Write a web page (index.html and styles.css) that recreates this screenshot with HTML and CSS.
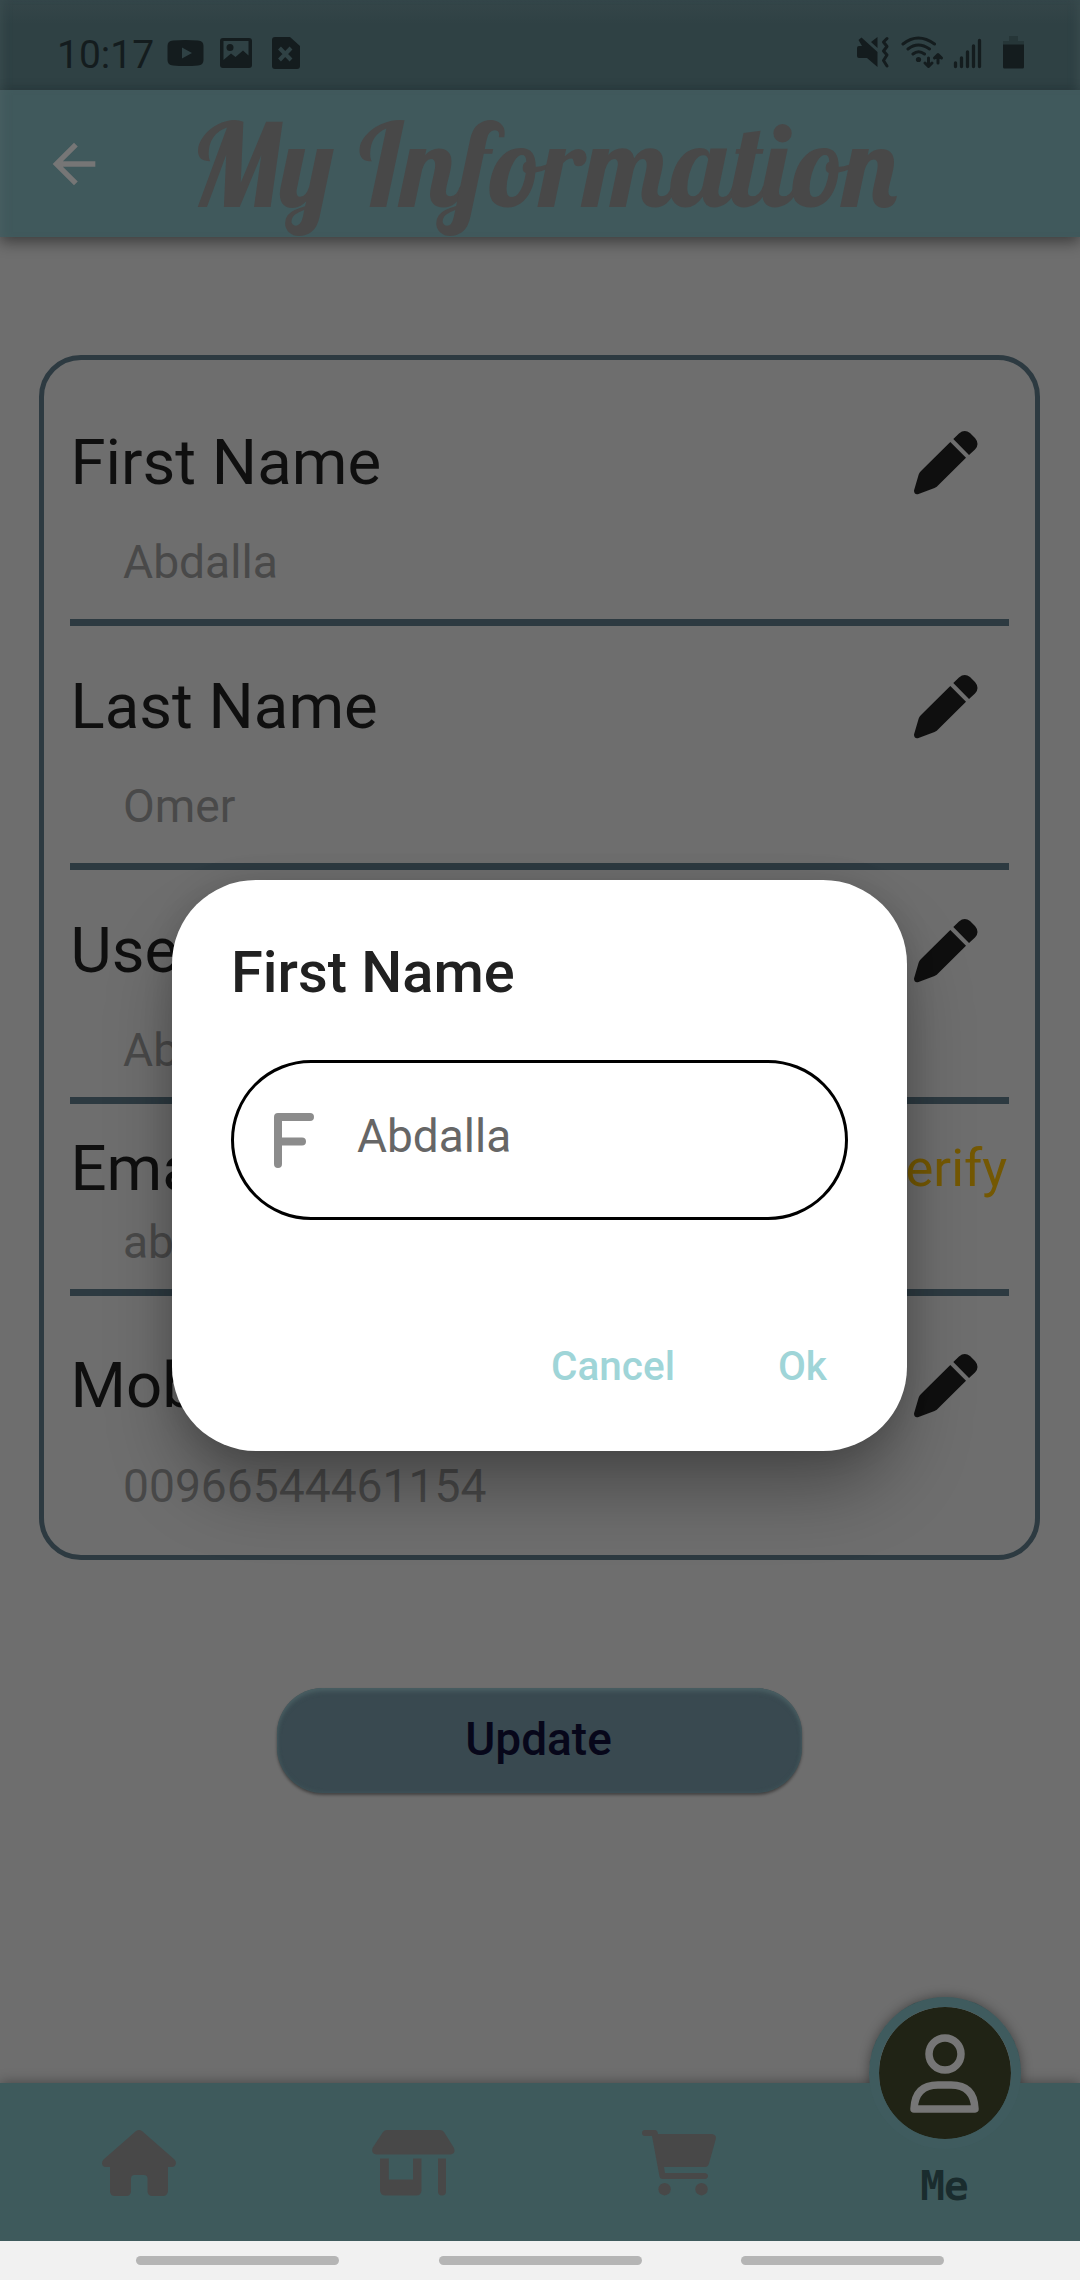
FILE: index.html
```html
<!DOCTYPE html>
<html lang="en">
<head>
<meta charset="utf-8">
<title>My Information</title>
<link rel="stylesheet" href="styles.css">
</head>
<body>
<svg class="defs" aria-hidden="true">
  <symbol id="pencil" viewBox="0 0 64 64">
    <path d="M39.3 8 45 2.5Q50.5-2 56 2l5 5q5 6 0 11.500L55 24ZM36.300 11 52 26.700 24.500 54Q23 56 20.500 57L4.500 63Q0 64 0 59.500L4.700 43.500Q5.300 41.500 7 40Z"/>
  </symbol>
</svg>
<div class="screen">
  <div class="status">
    <span class="clock">10:17</span>
    <svg class="st-youtube" width="37" height="26" viewBox="0 0 37 26"><path fill-rule="evenodd" d="M6 .6Q18.500-.6 31 .6 36.500 1 36.500 6V20Q36.500 25 31 25.500 18.500 26.500 6 25.500.500 25 .5 20V6Q.5 1 6 .6ZM15 7.500V18.500L25 13Z"/></svg>
    <svg class="st-image" width="32" height="30" viewBox="0 0 32 30"><path fill-rule="evenodd" d="M3 0H29Q32 0 32 3V27Q32 30 29 30H3Q0 30 0 27V3Q0 0 3 0ZM3.500 3V22L11 15.500 15.500 19 23 12.500 28.500 17.500V3Z"/><circle cx="10" cy="9.500" r="3.500"/></svg>
    <svg class="st-file" width="28" height="32" viewBox="0 0 28 32"><path d="M3 0H18L28 9V29Q28 32 25 32H3Q0 32 0 29V3Q0 0 3 0Z"/><path class="cross" d="M7.500 11 19 23M19 11 7.500 23"/></svg>
    <svg class="st-right" width="170" height="34" viewBox="0 0 170 34">
      <path d="M0 12Q0 10 2 10H5L1.500 4 4.500 1.500 20.500 16V31L10 22H2Q0 22 0 20ZM14 6 20.500 1V12Z"/>
      <path class="line" d="M30 2.500 26.500 6 30 10.500 26.500 15 30 19 26.500 24.500 30 30"/>
      <path class="line" d="M46 8Q61-4 77.500 8M51 13Q61 5 72.500 13M56 18Q61.500 13.500 67.500 18"/>
      <circle cx="61.500" cy="23.500" r="2.600"/>
      <path class="line" d="M71.500 22V30M68 27 71.500 30.500 75 27M81 27V19.500M77.500 22 81 18.500 84.500 22"/>
      <path class="bars" d="M98.500 27V30.500M104.500 22V30.500M110.500 16V30.500M116.500 10V30.500M122.500 4.500V30.500"/>
      <path class="faint" d="M152 0H161V5H167V9H146V5H152Z"/>
      <path d="M146 8.500H167V31Q167 32.500 165.500 32.500H147.500Q146 32.500 146 31Z"/>
    </svg>
  </div>
  <header class="appbar">
    <svg class="back" width="64" height="64" viewBox="0 0 24 24"><path d="M20 11H7.830l5.590-5.590L12 4l-8 8 8 8 1.410-1.410L7.830 13H20v-2z"/></svg>
    <h1>My Information</h1>
  </header>
  <main>
    <section class="card">
      <div class="row">
        <div class="head"><span>First Name</span><svg class="edit"><use href="#pencil"/></svg></div>
        <div class="value">Abdalla</div>
      </div>
      <div class="row">
        <div class="head"><span>Last Name</span><svg class="edit"><use href="#pencil"/></svg></div>
        <div class="value">Omer</div>
      </div>
      <div class="row row-user">
        <div class="head"><span>Use</span><svg class="edit"><use href="#pencil"/></svg></div>
        <div class="value">Ab</div>
      </div>
      <div class="row row-email">
        <div class="head"><span>Ema</span><a class="verify">erify</a></div>
        <div class="value">ab</div>
      </div>
      <div class="row row-mobile">
        <div class="head"><span>Mob</span><svg class="edit"><use href="#pencil"/></svg></div>
        <div class="value">00966544461154</div>
      </div>
    </section>
    <button class="update">Update</button>
  </main>
  <nav class="tabs">
    <div class="tab"><svg width="74" height="66" viewBox="0 0 74 66"><path d="M34 1Q37-1 40 1L72.500 29.500Q74 31 74 33 73.500 37 70 37H66V61Q65.500 66 61 66H50.500Q45.500 66 45.500 61V48.500Q45.500 45 42 45H32.500Q29 45 29 48.500V61Q29 66 24 66H13Q8 66 8 61V37H4Q0 37 0 33 0 31 1.500 29.500Z"/></svg></div>
    <div class="tab"><svg width="83" height="66" viewBox="0 0 83 66"><path d="M15 0H68Q70.500 0 72 2L82 18Q84 24 78.500 24.500H4.500Q-1 24 .5 18L11 2Q12.500 0 15 0ZM8 28.500H16.800V49.500H41V28.500H49.500V60Q49.500 65.500 44 65.500H14Q8 65.500 8 60ZM66 28.500H74V61.500Q74 65.500 70 65.500T66 61.500Z"/></svg></div>
    <div class="tab"><svg width="74" height="66" viewBox="0 0 74 66"><path d="M3 0H13Q15.500 0 16 4H70Q74.500 4.500 73.800 9L67 33.500Q66 37 63 37H22L23 43H63Q66 43.500 66 46T63 49H20.500Q18 49 17.500 46.500L10 6H3Q0 6 0 3T3 0Z"/><circle cx="22.600" cy="59.200" r="6.200"/><circle cx="59.500" cy="59.200" r="6.200"/></svg></div>
    <div class="tab tab-me">
      <div class="avatar"><svg width="69" height="79" viewBox="0 0 69 79"><circle cx="35" cy="20" r="16"/><path d="M4 75Q5 51 28 51H41Q64 51 65 75Z"/></svg></div>
      <span>Me</span>
    </div>
  </nav>
  <div class="gestures"><i></i><i></i><i></i></div>
  <div class="dialog">
    <h2>First Name</h2>
    <div class="field">
      <svg width="40" height="55" viewBox="0 0 40 55"><path d="M4 51V4H36M4 28.500H28"/></svg>
      <span>Abdalla</span>
    </div>
    <div class="actions"><a>Cancel</a><a>Ok</a></div>
  </div>
</div>
</body>
</html>
```
FILE: styles.css
```css
* { box-sizing: border-box; }
body {
  margin: 0;
  font-family: Roboto, "Liberation Sans", sans-serif;
}
svg { display: block; flex: none; }
.defs { position: absolute; width: 0; height: 0; }
.screen {
  position: relative;
  width: 1080px;
  height: 2280px;
  display: flex;
  flex-direction: column;
  overflow: hidden;
  background: #6e6e6e;
}

/* status bar */
.status {
  height: 90px;
  flex: none;
  display: flex;
  align-items: flex-start;
  padding-left: 57px;
  background: linear-gradient(#354649, #2f4144 24px);
  box-shadow: inset 8px 0 10px -6px #3a4c4f, inset -8px 0 10px -6px #3a4c4f;
  fill: #141c1e;
}
.clock {
  width: 110px;
  margin-top: 32px;
  font-size: 39px;
  line-height: 46px;
  color: #141c1e;
  white-space: nowrap;
}
.st-youtube { margin-top: 40px; }
.st-image { margin: 38px 0 0 16px; }
.st-file { margin: 37px 0 0 20px; }
.cross { stroke: #2f4144; stroke-width: 4; }
.st-right { margin: 36px 0 0 557px; }
.line { fill: none; stroke: #141c1e; stroke-width: 3; stroke-linecap: round; stroke-linejoin: round; }
.bars { stroke: #141c1e; stroke-width: 3.300; stroke-linecap: round; }
.faint { fill: #263638; }

/* app bar */
.appbar {
  height: 147px;
  flex: none;
  display: flex;
  align-items: center;
  padding-left: 42px;
  background: #40595c;
  box-shadow: 0 5px 14px rgba(0, 0, 0, .45), inset 8px 0 10px -6px #495f62;
}
.back { fill: #767676; }
.appbar h1 {
  margin: 0 0 0 84px;
  padding-top: 2px;
  font: 400 115.300px/147px Lobster, "Liberation Serif", serif;
  white-space: nowrap;
  color: #484848;
}

/* information card */
main {
  flex: 1;
  display: flex;
  flex-direction: column;
  align-items: flex-start;
  padding: 118px 39px 0;
}
.card {
  width: 1001px;
  height: 1205px;
  padding: 22px 26px 0;
  border: 5px solid #2d3a41;
  border-radius: 42px;
}
.row {
  height: 244px;
  padding-top: 19px;
  border-bottom: 7px solid #2d3a41;
}
.head {
  height: 124px;
  display: flex;
  align-items: center;
  justify-content: space-between;
  font-size: 63.500px;
  color: #0f0f0f;
}
.head span { padding: 0 0 1px .5px; }
.edit { width: 64px; height: 64px; margin-right: 31px; fill: #0f0f0f; }
.value {
  height: 74px;
  padding-left: 53px;
  font-size: 46.200px;
  line-height: 74px;
  color: #494949;
}
.row-user { height: 234px; }
.row-email { height: 192px; padding-top: 14px; }
.row-email .head { height: 101px; }
.row-email .value { height: 46px; line-height: 46px; }
.row-mobile { height: auto; padding-top: 28px; border-bottom: 0; }
.row-mobile .value { line-height: 76px; }
.verify { padding-bottom: 2px; font-size: 52.500px; color: #745803; margin-right: 2px; }
.update {
  width: 525px;
  height: 105px;
  margin: 128px 0 0 238px;
  padding: 0 2px 3px 0;
  border: 0;
  border-radius: 46px;
  background: #394950;
  box-shadow: inset 0 4px 5px -1px #4b6064, inset 0 0 4px #43585c, 0 2px 3px rgba(0, 0, 0, .4);
  font: 500 46px Roboto, "Liberation Sans", sans-serif;
  color: #07071a;
}

/* bottom navigation */
.tabs {
  height: 158px;
  flex: none;
  display: grid;
  grid-template-columns: 278px 270px 262px 270px;
  background: #3e5a5c;
  box-shadow: 0 0 12px rgba(0, 0, 0, .4);
}
.tab { position: relative; padding-top: 47px; display: flex; flex-direction: column; align-items: center; fill: #484848; }
.avatar {
  position: absolute;
  top: -86px;
  left: 59px;
  width: 152px;
  height: 152px;
  display: flex;
  align-items: center;
  justify-content: center;
  border: 10px solid #3f5b5e;
  border-radius: 50%;
  background: #202315 padding-box;
}
.avatar::before {
  content: "";
  position: absolute;
  inset: -10px;
  border-radius: 50%;
  box-shadow: 0 0 12px rgba(0, 0, 0, .4);
  clip-path: inset(-20px -20px 66px);
}
.avatar svg { margin-right: 1px; fill: none; stroke: #767676; stroke-width: 7.500; stroke-linejoin: round; }
.tab-me { padding-top: 79px; }
.tab-me span { margin-right: 2px; font: bold 41px/48px "DejaVu Sans Mono", monospace; letter-spacing: -1px; color: #1a2c2e; }
.gestures {
  position: relative;
  height: 39px;
  flex: none;
  display: flex;
  gap: 99.500px;
  padding: 15px 0 0 136px;
  background: #f1f1f1;
}
.gestures i { width: 203px; height: 9px; border-radius: 5px; background: #b5b5b5; }

/* edit dialog */
.dialog {
  position: absolute;
  left: 172px;
  top: 880px;
  width: 735px;
  height: 571px;
  padding: 58px 59px 0;
  border-radius: 84px;
  background: #fff;
  box-shadow: 0 44px 70px -8px rgba(0, 0, 0, .34), 0 0 30px rgba(0, 0, 0, .12);
}
.dialog h2 { margin: 0; font-size: 57.800px; line-height: 68px; font-weight: 500; color: #212121; }
.field {
  height: 160px;
  margin-top: 54px;
  display: flex;
  align-items: center;
  padding-left: 40px;
  border: 3px solid #000;
  border-radius: 80px;
}
.field svg { fill: none; stroke: #8c8c8c; stroke-width: 8; stroke-linecap: round; stroke-linejoin: round; }
.field span { margin: 0 0 8px 43px; font-size: 46px; color: #666; }
.actions {
  display: flex;
  justify-content: flex-end;
  gap: 103px;
  margin-top: 122px;
  padding-right: 21px;
  font-size: 40.500px;
  line-height: 48px;
  font-weight: 500;
  color: #9fd5d8;
}
```
